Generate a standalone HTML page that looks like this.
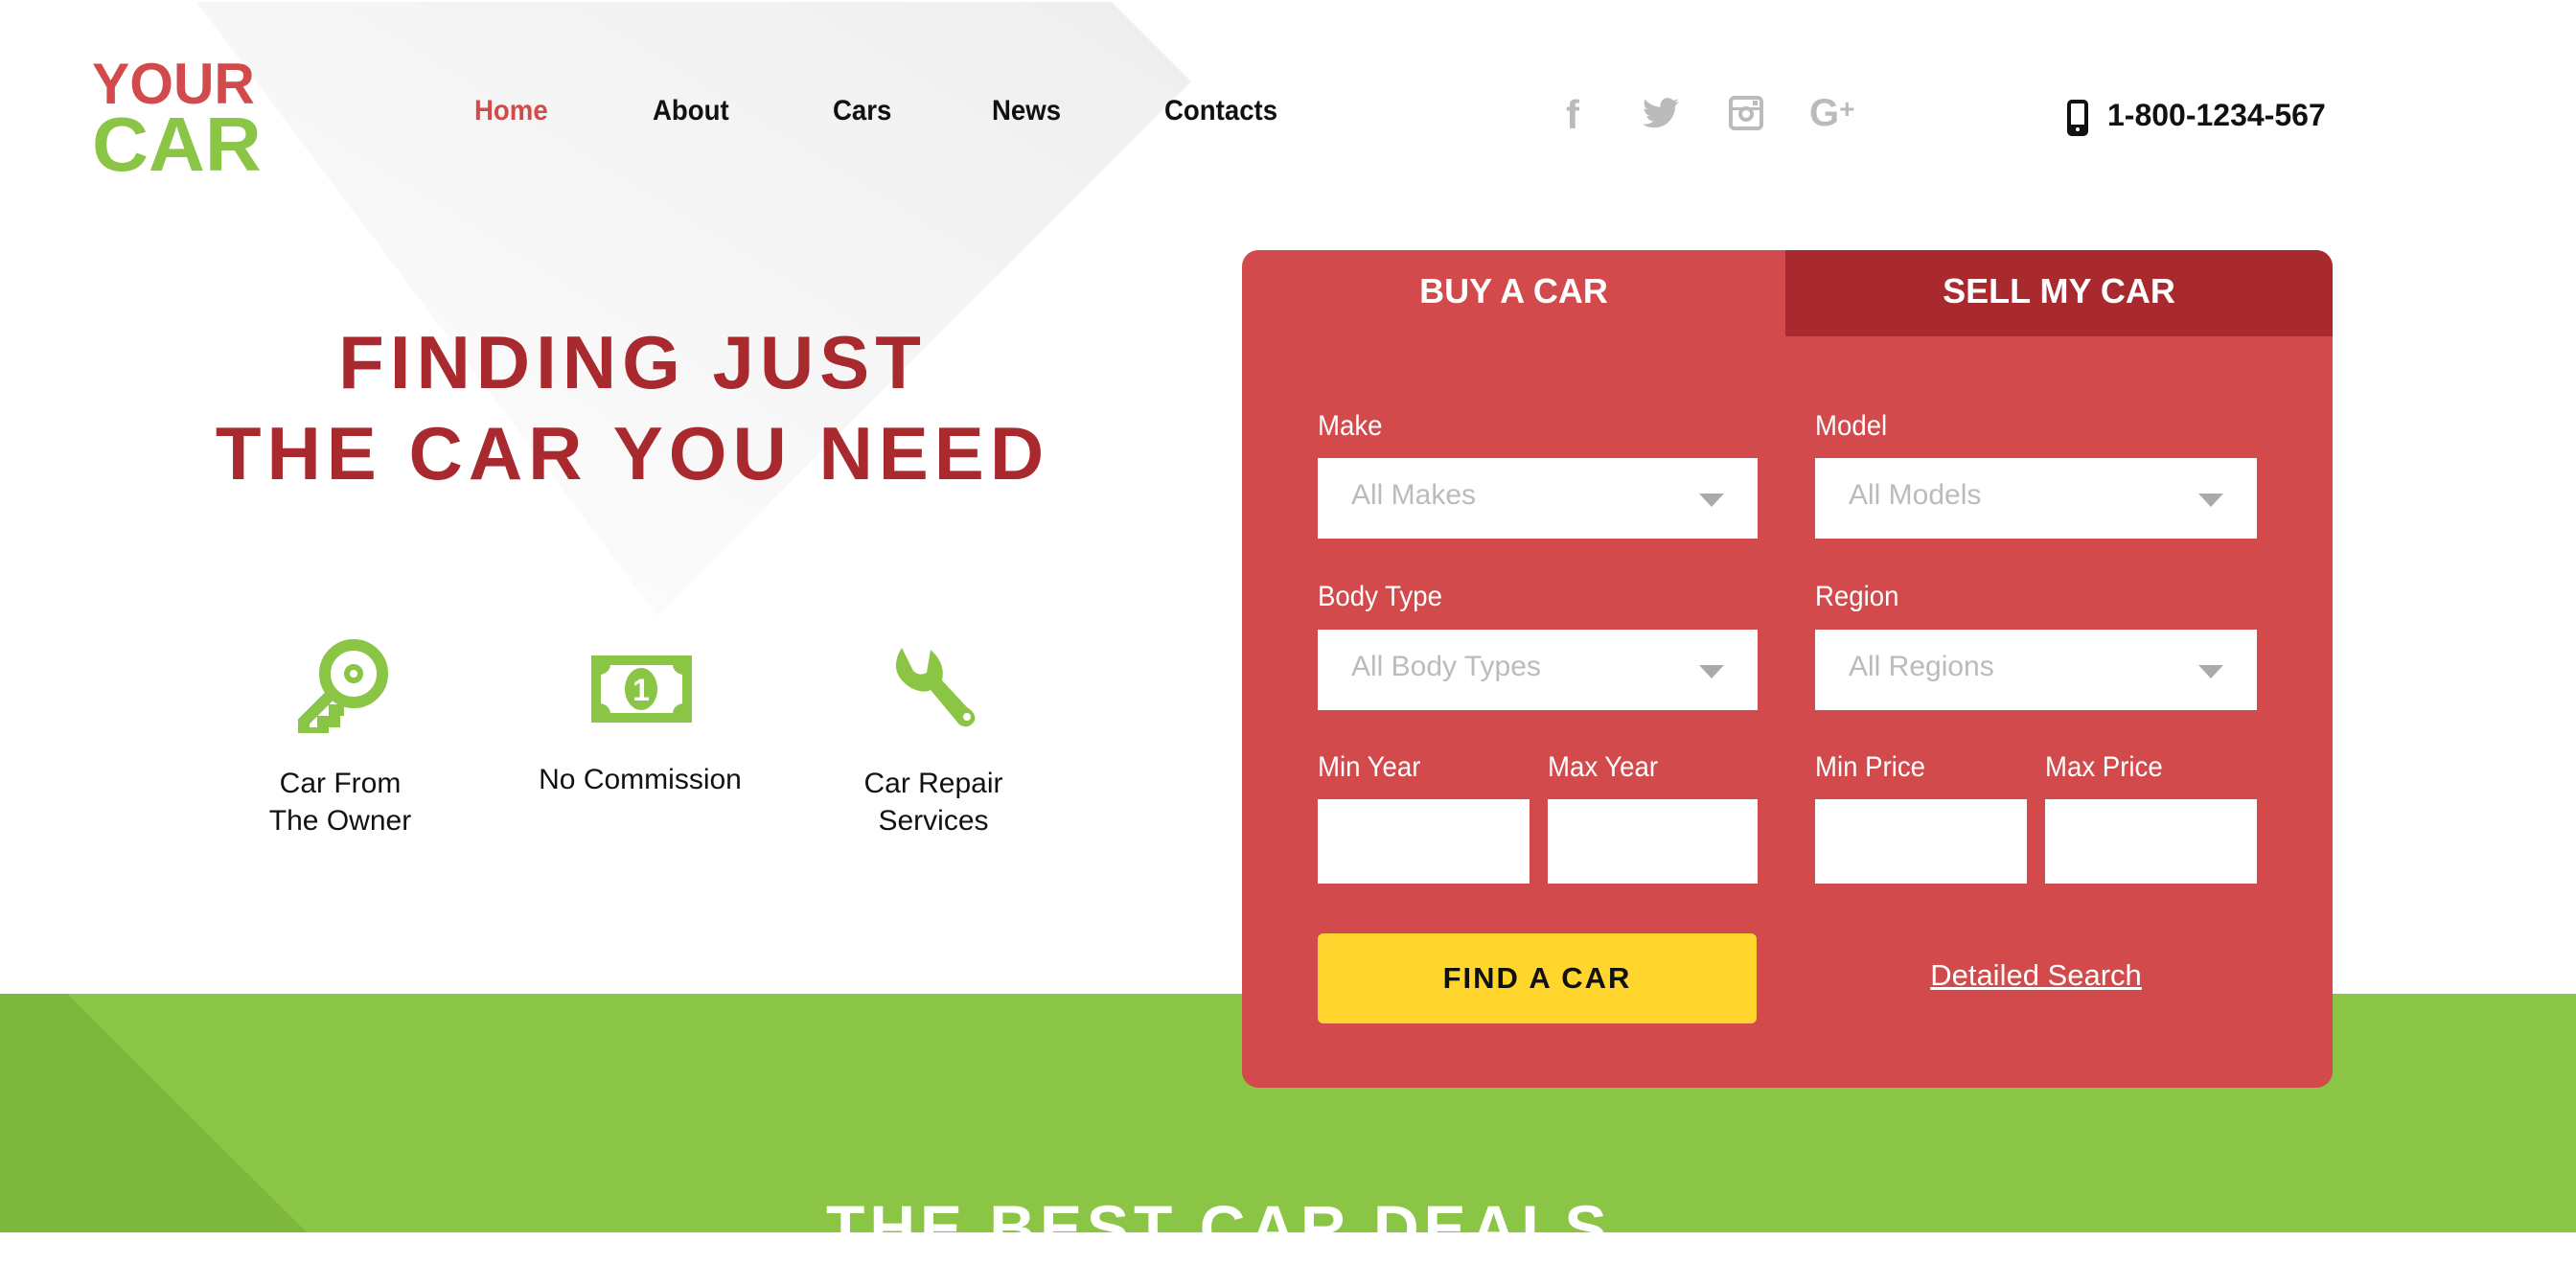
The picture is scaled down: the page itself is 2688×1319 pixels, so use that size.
<!DOCTYPE html>
<html><head><meta charset="utf-8"><style>
*{margin:0;padding:0;box-sizing:border-box}
body{width:2688px;height:1286px;overflow:hidden;background:#fff;position:relative;font-family:"Liberation Sans",sans-serif}
.a{position:absolute}
.nav{font-size:30px;font-weight:bold;color:#111;top:99px;transform:scaleX(.92);transform-origin:left}
.h{font-weight:bold;color:#a92a2e;font-size:78px;letter-spacing:6px;white-space:nowrap;text-align:center;width:1320px;left:0}
.ft{font-size:30px;color:#111;text-align:center;line-height:39px}
.lab{color:#fff;font-size:30px;transform:scaleX(.92);transform-origin:left}
.sel{background:#fff;height:84px;color:#bbb;font-size:30px;padding:22px 0 0 35px}
.sel:after{content:"";position:absolute;right:35px;top:37px;border-left:13px solid transparent;border-right:13px solid transparent;border-top:14px solid #aaa}
.inp{background:#fff;height:88px;top:834px}
</style></head><body>
<svg class="a" style="left:0;top:0" width="1300" height="650"><defs><linearGradient id="g" x1="1" y1="0" x2="0" y2="1"><stop offset="0" stop-color="#eeeeee"/><stop offset="1" stop-color="#fff"/></linearGradient></defs><polygon points="205,2 1160,2 1243,85 686,643" fill="url(#g)"/></svg>
<div class="a" style="left:96px;top:58px;font-size:60px;font-weight:bold;color:#d24a4b;line-height:60px;transform:scaleX(.98);transform-origin:left">YOUR</div>
<div class="a" style="left:96px;top:114px;font-size:80px;font-weight:bold;color:#8bc545;line-height:74px;transform:scaleX(1.02);transform-origin:left">CAR</div>
<div class="a nav" style="left:495px;color:#d24a4b">Home</div>
<div class="a nav" style="left:681px">About</div>
<div class="a nav" style="left:869px">Cars</div>
<div class="a nav" style="left:1035px">News</div>
<div class="a nav" style="left:1215px">Contacts</div>
<div class="a" style="left:1634px;top:96px;font-size:42px;font-weight:bold;color:#bbb">f</div>
<svg class="a" style="left:1714px;top:102px" width="38" height="32" viewBox="0 0 24 20"><path fill="#bbb" d="M24 2.4c-.9.4-1.8.6-2.8.8 1-.6 1.8-1.6 2.2-2.7-1 .6-2 1-3.1 1.2C19.3.7 18 0 16.6 0c-2.7 0-4.9 2.2-4.9 4.9 0 .4 0 .8.1 1.1C7.7 5.8 4.1 3.9 1.700.9c-.4.7-.7 1.6-.7 2.5 0 1.700.9 3.200 2.2 4.1-.8 0-1.6-.2-2.2-.6v.1c0 2.4 1.7 4.4 3.9 4.8-.4.1-.8.2-1.3.2-.3 0-.6 0-.9-.1.6 2 2.4 3.4 4.6 3.4-1.7 1.3-3.8 2.1-6.1 2.1H0c2.2 1.4 4.8 2.2 7.5 2.2 9.1 0 14-7.5 14-14v-.6c1-.7 1.8-1.6 2.5-2.6z"/></svg>
<svg class="a" style="left:1804px;top:100px" width="36" height="36" viewBox="0 0 36 36"><rect x="2" y="2" width="32" height="32" rx="4" fill="none" stroke="#bbb" stroke-width="4"/><circle cx="18" cy="19" r="6" fill="none" stroke="#bbb" stroke-width="4"/><rect x="2" y="12" width="32" height="3" fill="#bbb"/><rect x="25" y="5" width="5" height="5" fill="#bbb"/></svg>
<div class="a" style="left:1888px;top:96px;font-size:40px;font-weight:bold;color:#bbb">G<span style="font-size:28px;vertical-align:8px">+</span></div>
<svg class="a" style="left:2157px;top:104px" width="22" height="38"><rect x="2" y="2" width="18" height="34" rx="3" fill="none" stroke="#111" stroke-width="4"/><rect x="2" y="26" width="18" height="10" fill="#111"/><circle cx="11" cy="31" r="2" fill="#fff"/></svg>
<div class="a" style="left:2199px;top:102px;font-size:32px;font-weight:bold;color:#111">1-800-1234-567</div>
<div class="a h" style="top:333px">FINDING JUST</div>
<div class="a h" style="top:428px">THE CAR YOU NEED</div>
<svg class="a" style="left:307px;top:665px" width="100" height="100" viewBox="0 0 100 100"><circle cx="62" cy="38" r="30" fill="none" stroke="#8bc545" stroke-width="12"/><circle cx="62" cy="38" r="7" fill="none" stroke="#8bc545" stroke-width="6"/><path d="M40 58 L10 88 V100 H30 V88 H42 V76 H52" fill="none" stroke="#8bc545" stroke-width="12"/></svg>
<svg class="a" style="left:617px;top:684px" width="105" height="70" viewBox="0 0 105 70"><rect width="105" height="70" fill="#8bc545"/><path d="M20 10 H85 Q86 18 95 20 V50 Q86 52 85 60 H20 Q19 52 10 50 V20 Q19 18 20 10Z" fill="#fff"/><ellipse cx="52" cy="35" rx="17" ry="22" fill="#8bc545"/><text x="52" y="47" font-size="32" font-weight="bold" fill="#fff" text-anchor="middle" font-family="Liberation Sans">1</text></svg>
<svg class="a" style="left:929px;top:672px" width="90" height="90" viewBox="0 0 90 90"><path d="M12 4 Q-4 30 22 46 Q34 52 42 48 L72 84 Q82 90 88 80 Q90 72 80 66 L54 38 Q58 20 42 6 L38 30 Q30 34 24 28Z" fill="#8bc545"/><circle cx="80" cy="76" r="4" fill="#fff"/></svg>
<div class="a ft" style="left:255px;top:798px;width:200px">Car From<br>The Owner</div>
<div class="a ft" style="left:540px;top:794px;width:256px">No Commission</div>
<div class="a ft" style="left:874px;top:798px;width:200px">Car Repair<br>Services</div>
<div class="a" style="left:0;top:1037px;width:2688px;height:249px;background:#8bc545"></div>
<svg class="a" style="left:0;top:1037px" width="340" height="249"><polygon points="0,0 70,0 320,249 0,249" fill="#7db83d"/></svg>
<div class="a" style="left:862px;width:800px;top:1243px;text-align:center;color:#fff;font-size:66px;font-weight:bold;letter-spacing:5px;white-space:nowrap">THE BEST CAR DEALS</div>
<div class="a" style="left:1296px;top:261px;width:1138px;height:874px;background:#d24a4b;border-radius:17px;overflow:hidden">
 <div class="a" style="left:567px;top:0;width:571px;height:90px;background:#a92a2e"></div>
 <div class="a" style="left:0;top:22px;width:567px;text-align:center;color:#fff;font-size:36px;font-weight:bold">BUY A CAR</div>
 <div class="a" style="left:567px;top:22px;width:571px;text-align:center;color:#fff;font-size:36px;font-weight:bold">SELL MY CAR</div>
</div>
<div class="a lab" style="left:1375px;top:428px">Make</div>
<div class="a lab" style="left:1894px;top:428px">Model</div>
<div class="a sel" style="left:1375px;top:478px;width:459px">All Makes</div>
<div class="a sel" style="left:1894px;top:478px;width:461px">All Models</div>
<div class="a lab" style="left:1375px;top:606px">Body Type</div>
<div class="a lab" style="left:1894px;top:606px">Region</div>
<div class="a sel" style="left:1375px;top:657px;width:459px">All Body Types</div>
<div class="a sel" style="left:1894px;top:657px;width:461px">All Regions</div>
<div class="a lab" style="left:1375px;top:784px">Min Year</div>
<div class="a lab" style="left:1615px;top:784px">Max Year</div>
<div class="a lab" style="left:1894px;top:784px">Min Price</div>
<div class="a lab" style="left:2134px;top:784px">Max Price</div>
<div class="a inp" style="left:1375px;width:221px"></div>
<div class="a inp" style="left:1615px;width:219px"></div>
<div class="a inp" style="left:1894px;width:221px"></div>
<div class="a inp" style="left:2134px;width:221px"></div>
<div class="a" style="left:1375px;top:974px;width:458px;height:94px;background:#ffd52e;border-radius:6px;text-align:center;font-size:31px;font-weight:bold;line-height:94px;letter-spacing:2px;color:#111">FIND A CAR</div>
<div class="a" style="left:1894px;top:1000px;width:461px;text-align:center;color:#fff;font-size:31px;text-decoration:underline">Detailed Search</div>
</body></html>
